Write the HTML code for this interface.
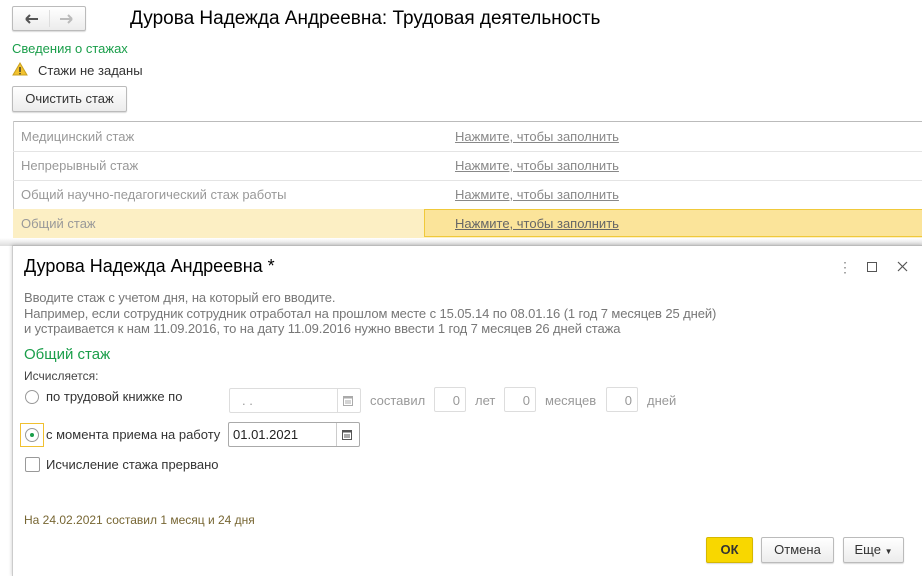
<!DOCTYPE html>
<html><head><meta charset="utf-8"><style>
body{margin:0;width:922px;height:575px;overflow:hidden;background:#fff;font-family:"Liberation Sans",Arial,sans-serif;font-size:13px;color:#333;position:relative}
.a{position:absolute;white-space:nowrap}
.btn{position:absolute;border:1px solid #bbb;border-radius:2px;background:linear-gradient(#fff,#ececec);box-shadow:0 1px 1px rgba(0,0,0,.15);text-align:center;color:#333}
.row{position:absolute;left:13px;width:909px;height:29px;border-bottom:1px solid #e4e4e4}
.row .l{position:absolute;left:8px;top:7px;color:#999}
.row .r{position:absolute;left:442px;top:7px;color:#888;text-decoration:underline}
.inp{position:absolute;border:1px solid #ccc;border-radius:2px;background:#fff;height:23px}
.g{color:#999}
</style></head><body>
<div class="btn" style="left:12px;top:6px;width:72px;height:23px">
<svg class="a" style="left:12px;top:7px" width="14" height="10"><path d="M1 5H13M1 5L5 1M1 5L5 9" stroke="#555" stroke-width="2" fill="none"/></svg>
<span style="position:absolute;left:36px;top:3px;height:17px;border-left:1px solid #ddd"></span>
<svg class="a" style="left:46px;top:7px" width="14" height="10"><path d="M1 5H13M13 5L9 1M13 5L9 9" stroke="#bbb" stroke-width="2" fill="none"/></svg></div>
<div class="a" style="left:130px;top:8px;font-size:19px;color:#000">Дурова Надежда Андреевна: Трудовая деятельность</div>
<div class="a" style="left:12px;top:41px;color:#1a9e4a">Сведения о стажах</div>
<svg class="a" style="left:12px;top:62px" width="16" height="14"><path d="M8 1L15 13H1Z" fill="#f2c22e" stroke="#c9a020"/><rect x="7.3" y="5" width="1.4" height="5" fill="#333"/><rect x="7.3" y="11" width="1.4" height="1.3" fill="#333"/></svg>
<div class="a" style="left:38px;top:63px;color:#333">Стажи не заданы</div>
<div class="btn" style="left:12px;top:86px;width:113px;height:24px;line-height:24px">Очистить стаж</div>
<div style="position:absolute;left:13px;top:121px;width:909px;border-top:1px solid #bbb"></div>
<div style="position:absolute;left:13px;top:121px;height:125px;border-left:1px solid #ccc"></div>
<div class="row" style="top:122px"><span class="a l">Медицинский стаж</span><span class="a r">Нажмите, чтобы заполнить</span></div>
<div class="row" style="top:151px"><span class="a l">Непрерывный стаж</span><span class="a r">Нажмите, чтобы заполнить</span></div>
<div class="row" style="top:180px"><span class="a l">Общий научно-педагогический стаж работы</span><span class="a r">Нажмите, чтобы заполнить</span></div>
<div class="row" style="top:209px;background:#fcefc4"><span class="a l">Общий стаж</span><div style="position:absolute;left:411px;top:0;width:498px;height:26px;background:#fbe49a;border:1px solid #f0c93a"></div><span class="a r" style="color:#666">Нажмите, чтобы заполнить</span></div>
<div style="position:absolute;left:0;top:238px;width:922px;height:8px;background:linear-gradient(#fff,#ddd)"></div>
<div style="position:absolute;left:12px;top:245px;width:910px;height:330px;background:#fff;border-left:1px solid #ccc;border-top:1px solid #bbb;box-shadow:0 0 4px rgba(0,0,0,.2)"></div>
<div class="a" style="left:24px;top:256px;font-size:18px;color:#000">Дурова Надежда Андреевна *</div>
<div class="a" style="left:838px;top:259px;font-size:14px;color:#888">&#8942;</div>
<div style="position:absolute;left:867px;top:262px;width:8px;height:8px;border:1px solid #555"></div>
<svg class="a" style="left:897px;top:261px" width="11" height="11"><path d="M1 1L10 10M10 1L1 10" stroke="#555" stroke-width="1.2"/></svg>
<div class="a" style="left:24px;top:290px;font-size:13px;color:#777;line-height:15.5px;letter-spacing:-0.1px">Вводите стаж с учетом дня, на который его вводите.<br>Например, если сотрудник сотрудник отработал на прошлом месте с 15.05.14 по 08.01.16 (1 год 7 месяцев 25 дней)<br>и устраивается к нам 11.09.2016, то на дату 11.09.2016 нужно ввести 1 год 7 месяцев 26 дней стажа</div>
<div class="a" style="left:24px;top:346px;font-size:15px;color:#1a9e4a">Общий стаж</div>
<div class="a" style="left:24px;top:369px;font-size:12px;color:#444">Исчисляется:</div>
<div style="position:absolute;left:25px;top:390px;width:12px;height:12px;border:1px solid #999;border-radius:50%"></div>
<div class="a" style="left:46px;top:389px;color:#333">по трудовой книжке по</div>
<div class="inp" style="left:229px;top:388px;width:130px;border-color:#ddd"><span class="a g" style="left:12px;top:4px">. .</span><span style="position:absolute;left:107px;top:0;height:23px;border-left:1px solid #ddd"></span><svg class="a" style="left:113px;top:6px" width="10" height="11"><rect x="0.5" y="1.5" width="9" height="9" fill="none" stroke="#aaa"/><rect x="0.5" y="1.5" width="9" height="2" fill="#aaa"/><path d="M2 6h6M2 8h6" stroke="#aaa"/></svg></div>
<div class="a g" style="left:370px;top:393px">составил</div>
<div class="inp" style="left:434px;top:387px;width:30px;border-color:#ddd"><span class="a g" style="right:5px;top:5px">0</span></div>
<div class="a g" style="left:475px;top:393px">лет</div>
<div class="inp" style="left:504px;top:387px;width:30px;border-color:#ddd"><span class="a g" style="right:5px;top:5px">0</span></div>
<div class="a g" style="left:545px;top:393px">месяцев</div>
<div class="inp" style="left:606px;top:387px;width:30px;border-color:#ddd"><span class="a g" style="right:5px;top:5px">0</span></div>
<div class="a g" style="left:647px;top:393px">дней</div>
<div style="position:absolute;left:20px;top:423px;width:22px;height:22px;border:1px solid #f0c030"></div>
<div style="position:absolute;left:25px;top:428px;width:12px;height:12px;border:1px solid #999;border-radius:50%"><div style="position:absolute;left:4px;top:4px;width:4px;height:4px;border-radius:50%;background:#1a9e4a"></div></div>
<div class="a" style="left:46px;top:427px;color:#333">с момента приема на работу</div>
<div class="inp" style="left:228px;top:422px;width:130px;border-color:#aaa"><span class="a" style="left:4px;top:4px;color:#222">01.01.2021</span><span style="position:absolute;left:107px;top:0;height:23px;border-left:1px solid #ccc"></span><svg class="a" style="left:113px;top:6px" width="10" height="11"><rect x="0.5" y="1.5" width="9" height="9" fill="none" stroke="#555"/><rect x="0.5" y="1.5" width="9" height="2" fill="#555"/><path d="M2 6h6M2 8h6" stroke="#555"/></svg></div>
<div style="position:absolute;left:25px;top:457px;width:13px;height:13px;border:1px solid #999;border-radius:2px"></div>
<div class="a" style="left:46px;top:457px;color:#333">Исчисление стажа прервано</div>
<div class="a" style="left:24px;top:513px;font-size:12px;color:#776633">На 24.02.2021 составил 1 месяц и 24 дня</div>
<div class="btn" style="left:706px;top:537px;width:45px;height:24px;line-height:24px;background:#f8d700;border-color:#d6b800;font-weight:bold;color:#333">ОК</div>
<div class="btn" style="left:761px;top:537px;width:71px;height:24px;line-height:24px">Отмена</div>
<div class="btn" style="left:843px;top:537px;width:59px;height:24px;line-height:24px">Еще <span style="font-size:8px">&#9660;</span></div>
</body></html>
